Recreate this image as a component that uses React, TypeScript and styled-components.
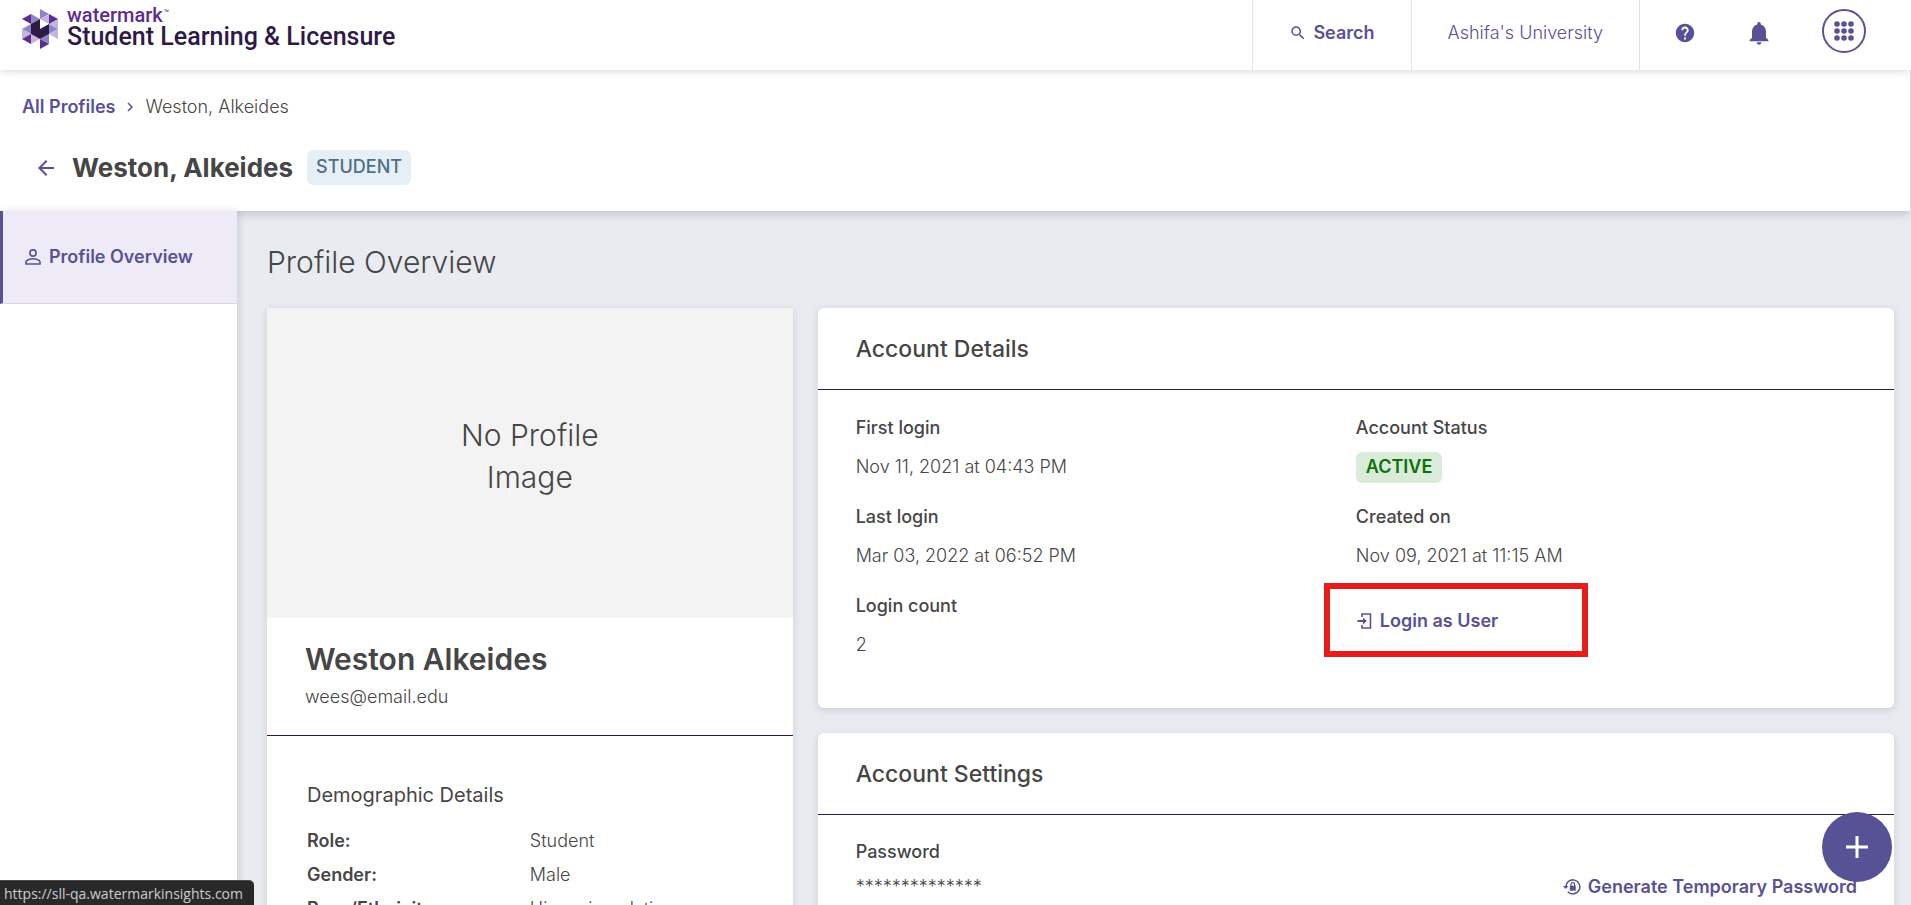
import React from "react";
import styled, { createGlobalStyle } from "styled-components";
import { MdSearch, MdHelp, MdNotifications, MdArrowBack, MdChevronRight } from "react-icons/md";

const color = {
  brand: "#575195",
  line: "#2d1a47",
  text: "#464646",
  page: "#e8ebf0",
};

const GlobalStyle = createGlobalStyle`
  *, *::before, *::after { box-sizing: border-box; }
  body {
    margin: 0;
    font-family: Inter, "Liberation Sans", sans-serif;
    font-size: 18px;
    font-weight: 350;
    line-height: 26px;
    color: ${color.text};
    background: ${color.page};
  }
  h1, h2, h3, p, dl, dt, dd { margin: 0; }
  a { color: inherit; text-decoration: none; }
  button { font: inherit; color: inherit; background: none; border: 0; padding: 0; cursor: pointer; }
`;

const Page = styled.div`
  height: 100vh;
  overflow: hidden;
  display: flex;
  flex-direction: column;
`;

const TopBar = styled.header`
  position: relative;
  z-index: 3;
  flex: none;
  display: flex;
  justify-content: space-between;
  height: 70px;
  background: #fff;
  box-shadow: 0 1px 8px rgba(0, 0, 0, 0.16);
`;

const Brand = styled.a`
  display: flex;
  align-items: flex-start;
  gap: 9px;
  padding: 6px 0 0 22px;
  font-family: Roboto, "Liberation Sans", sans-serif;
  svg { margin-top: 3px; }
`;

const BrandText = styled.span`
  display: flex;
  flex-direction: column;
`;

const BrandName = styled.span`
  display: flex;
  align-items: flex-start;
  gap: 1px;
  font-size: 20px;
  line-height: 18px;
  font-weight: 500;
  color: #5c2d91;
`;

const Trademark = styled.span`
  font-size: 9px;
  line-height: 14px;
  font-weight: 400;
`;

const ProductName = styled.span`
  font-size: 25px;
  line-height: 26px;
  font-weight: 500;
  color: #2d1a47;
`;

const TopNav = styled.nav`
  display: flex;
  color: ${color.brand};
`;

const NavItem = styled.button<{ $bold?: boolean }>`
  display: flex;
  align-items: center;
  gap: 6px;
  padding: 0 36px 4px;
  border-left: 1px solid #e3e4ea;
  font-weight: ${(p) => (p.$bold ? 600 : 350)};
`;

const NavIcons = styled.div`
  display: flex;
  align-items: center;
  gap: 49px;
  padding: 0 45px 9px 34px;
  border-left: 1px solid #e3e4ea;
`;

const IconButton = styled.button`
  display: flex;
  padding-top: 4px;
`;

const AppsButton = styled(IconButton)`
  width: 44px;
  height: 44px;
  padding-top: 0;
  align-items: center;
  justify-content: center;
  border: 2px solid ${color.brand};
  border-radius: 50%;
`;

const ProfileHeader = styled.div`
  position: relative;
  z-index: 1;
  flex: none;
  display: flex;
  flex-direction: column;
  gap: 30px;
  height: 141px;
  margin-right: 1px;
  padding: 24px 22px 0;
  background: #fff;
  box-shadow: 0 2px 10px rgba(0, 0, 0, 0.2);
`;

const Breadcrumb = styled.nav`
  display: flex;
  align-items: center;
  gap: 6px;
  a { font-weight: 600; color: ${color.brand}; }
  svg { color: ${color.brand}; }
`;

const TitleRow = styled.div`
  display: flex;
  align-items: center;
  gap: 14px;
  padding-left: 12px;
`;

const BackLink = styled.a`
  display: flex;
  color: ${color.brand};
`;

const PersonTitle = styled.h1`
  font-size: 26px;
  line-height: 34px;
  font-weight: 700;
`;

const Badge = styled.span<{ $tone: "info" | "success" }>`
  display: inline-block;
  padding: ${(p) => (p.$tone === "info" ? "4px 9px 5px" : "2px 10px 3px")};
  border-radius: 6px;
  font-weight: ${(p) => (p.$tone === "info" ? 500 : 600)};
  color: ${(p) => (p.$tone === "info" ? "#4f6f86" : "#0b720b")};
  background: ${(p) => (p.$tone === "info" ? "#e6eff6" : "#daebda")};
`;

const Body = styled.div`
  flex: 1;
  min-height: 0;
  display: flex;
`;

const Sidebar = styled.aside`
  position: relative;
  z-index: 2;
  flex: none;
  width: 237px;
  background: #fff;
  box-shadow: 2px 0 8px rgba(0, 0, 0, 0.12);
`;

const SideLink = styled.a`
  display: flex;
  align-items: center;
  gap: 8px;
  height: 93px;
  padding: 0 22px;
  border-left: 3px solid ${color.brand};
  border-bottom: 1px solid #d9d8e2;
  font-weight: 600;
  color: ${color.brand};
  background: #eeebf7;
`;

const Main = styled.main`
  flex: 1;
  min-width: 0;
  padding: 30px 17px 0 30px;
`;

const PageTitle = styled.h2`
  margin-bottom: 25px;
  font-size: 30px;
  line-height: 42px;
  font-weight: 350;
`;

const Columns = styled.div`
  display: grid;
  grid-template-columns: repeat(3, minmax(0, 1fr));
  gap: 25px;
  align-items: start;
`;

const RightColumn = styled.div`
  grid-column: span 2;
  display: grid;
  gap: 25px;
`;

const Card = styled.section<{ $square?: boolean }>`
  background: #fff;
  border-radius: ${(p) => (p.$square ? 0 : 6)}px;
  box-shadow: 0 2px 8px rgba(0, 0, 0, 0.12);
`;

const Photo = styled.div`
  display: flex;
  align-items: center;
  justify-content: center;
  height: 310px;
  padding-bottom: 14px;
  background: #f3f3f3;
  font-size: 30px;
  line-height: 42px;
  text-align: center;
  span { width: 160px; }
`;

const Identity = styled.div`
  padding: 20px 38px 25px;
  border-bottom: 1px solid ${color.line};
`;

const Name = styled.h3`
  margin-bottom: 4px;
  font-size: 30px;
  line-height: 42px;
  font-weight: 600;
`;

const Demographics = styled.div`
  padding: 45px 40px 30px;
`;

const DemographicTitle = styled.h3`
  margin-bottom: 19px;
  font-size: 20px;
  line-height: 28px;
  font-weight: 400;
`;

const DemographicList = styled.dl`
  display: grid;
  grid-template-columns: 1fr 1fr;
  row-gap: 8px;
  dt { font-weight: 600; }
`;

const CardHeader = styled.h3`
  padding: 24px 38px 23px;
  border-bottom: 1px solid ${color.line};
  font-size: 23px;
  line-height: 34px;
  font-weight: 500;
`;

const DetailGrid = styled.div`
  display: grid;
  grid-template-columns: 1fr 1fr;
  padding: 25px 38px 26px;
`;

const DetailList = styled.dl`
  dt { font-weight: 500; margin-bottom: 13px; }
  dd { height: 26px; margin-bottom: 24px; }
`;

const StatusValue = styled.dd`
  display: flex;
  align-items: center;
`;

const ActionButton = styled.button`
  display: flex;
  align-items: center;
  gap: 7px;
  font-weight: 600;
  color: ${color.brand};
`;

const Highlight = styled.div`
  position: relative;
  margin-top: 39px;
  &::before {
    content: "";
    position: absolute;
    top: -25px;
    left: -32px;
    width: 264px;
    height: 74px;
    border: 6px solid #e81c1c;
    pointer-events: none;
  }
`;

const PasswordRow = styled.div`
  display: flex;
  justify-content: space-between;
  align-items: flex-end;
  padding: 24px 37px 24px 38px;
  dt { font-weight: 500; margin-bottom: 9px; }
`;

const AddButton = styled.button`
  position: fixed;
  z-index: 4;
  right: 19px;
  bottom: 23px;
  display: flex;
  align-items: center;
  justify-content: center;
  width: 70px;
  height: 70px;
  border-radius: 50%;
  color: #fff;
  background: ${color.brand};
`;

const LinkStatus = styled.div`
  position: fixed;
  z-index: 5;
  left: 0;
  bottom: 0;
  padding: 3px 11px 1px 4px;
  border-top: 1px solid #4a4a4a;
  border-radius: 0 5px 0 0;
  font-family: "Open Sans", "Noto Sans", sans-serif;
  font-size: 14px;
  font-weight: 400;
  line-height: 20px;
  color: #c9cdd2;
  background: #292929;
`;

const Logo = () => (
  <svg width="36" height="40" viewBox="0 0 36 40" aria-hidden="true">
    <path d="M18 0v10l9-5zM9 5v10l9-5zM9 15v10l-9-5zM27 15v10l9-5zM27 25v10l-9-5z" fill="#8a85c4" />
    <path d="M27 5v10l-9-5zM36 10v10l-9-5zM0 20v10l9-5zM36 20v10l-9-5zM9 25v10l9-5z" fill="#c5b4de" />
    <path d="M9 5v10l-9-5zM27 5v10l9-5zM9 25v10l-9-5zM18 30v10l9-5z" fill="#5c2d91" />
    <path d="M9 15l9-5v10l9-5v10l-9 5-9-5z" fill="#2d1a47" />
  </svg>
);

const PersonIcon = () => (
  <svg width="16" height="16" viewBox="0 0 16 16" fill="none" stroke="currentColor" strokeWidth="1.6" aria-hidden="true">
    <circle cx="8" cy="4" r="3.1" />
    <path d="M1 15v-2c0-2 3.8-3.2 7-3.2s7 1.2 7 3.2v2z" />
  </svg>
);

const dots = [4, 11, 18];

const AppsIcon = () => (
  <svg width="22" height="22" viewBox="0 0 22 22" fill="currentColor" aria-hidden="true">
    {dots.map((y) => dots.map((x) => <circle key={`${x}-${y}`} cx={x} cy={y} r="2.8" />))}
  </svg>
);

const LoginIcon = () => (
  <svg width="17" height="16" viewBox="0 0 17 16" fill="none" stroke="currentColor" strokeWidth="1.6" aria-hidden="true">
    <path d="M6 4V1h8.5v14H6v-3" />
    <path d="M1.5 8H8" strokeWidth="2" />
    <path d="M7 4.5L10.8 8 7 11.5z" fill="currentColor" stroke="none" />
  </svg>
);

const LockResetIcon = () => (
  <svg width="18" height="16" viewBox="0 0 18 16" fill="none" stroke="currentColor" strokeWidth="1.5" aria-hidden="true">
    <path d="M2.8 8a7 7 0 1 1 2 4.8" />
    <path d="M0 7h5.5L2.7 10z" fill="currentColor" stroke="none" />
    <path d="M8 7V5.4a1.8 1.8 0 0 1 3.6 0V7" strokeWidth="1.2" />
    <path d="M6.800 6.700h6v5h-6z" fill="currentColor" stroke="none" />
  </svg>
);

const PlusIcon = () => (
  <svg width="22" height="22" viewBox="0 0 22 22" stroke="currentColor" strokeWidth="3" aria-hidden="true">
    <path d="M11 0v22M0 11h22" />
  </svg>
);

const demographics = [
  ["Role:", "Student"],
  ["Gender:", "Male"],
  ["Race/Ethnicity:", "Hispanic or latino"],
];

const loginDetails = [
  ["First login", "Nov 11, 2021 at 04:43 PM"],
  ["Last login", "Mar 03, 2022 at 06:52 PM"],
  ["Login count", "2"],
];

export default function App() {
  return (
    <Page>
      <GlobalStyle />
      <TopBar>
        <Brand href="#home">
          <Logo />
          <BrandText>
            <BrandName>watermark<Trademark>™</Trademark></BrandName>
            <ProductName>Student Learning &amp; Licensure</ProductName>
          </BrandText>
        </Brand>
        <TopNav>
          <NavItem $bold><MdSearch size={18} />Search</NavItem>
          <NavItem>Ashifa's University</NavItem>
          <NavIcons>
            <IconButton aria-label="Help"><MdHelp size={22} /></IconButton>
            <IconButton aria-label="Notifications"><MdNotifications size={28} /></IconButton>
            <AppsButton aria-label="Apps"><AppsIcon /></AppsButton>
          </NavIcons>
        </TopNav>
      </TopBar>
      <ProfileHeader>
        <Breadcrumb aria-label="Breadcrumb">
          <a href="#profiles">All Profiles</a>
          <MdChevronRight size={18} />
          <span>Weston, Alkeides</span>
        </Breadcrumb>
        <TitleRow>
          <BackLink href="#profiles" aria-label="Back"><MdArrowBack size={24} /></BackLink>
          <PersonTitle>Weston, Alkeides</PersonTitle>
          <Badge $tone="info">STUDENT</Badge>
        </TitleRow>
      </ProfileHeader>
      <Body>
        <Sidebar>
          <SideLink href="#overview"><PersonIcon />Profile Overview</SideLink>
        </Sidebar>
        <Main>
          <PageTitle>Profile Overview</PageTitle>
          <Columns>
            <Card $square>
              <Photo><span>No Profile Image</span></Photo>
              <Identity>
                <Name>Weston Alkeides</Name>
                <p>wees@email.edu</p>
              </Identity>
              <Demographics>
                <DemographicTitle>Demographic Details</DemographicTitle>
                <DemographicList>
                  {demographics.map(([label, value]) => (
                    <React.Fragment key={label}>
                      <dt>{label}</dt>
                      <dd>{value}</dd>
                    </React.Fragment>
                  ))}
                </DemographicList>
              </Demographics>
            </Card>
            <RightColumn>
              <Card>
                <CardHeader>Account Details</CardHeader>
                <DetailGrid>
                  <DetailList>
                    {loginDetails.map(([label, value]) => (
                      <React.Fragment key={label}>
                        <dt>{label}</dt>
                        <dd>{value}</dd>
                      </React.Fragment>
                    ))}
                  </DetailList>
                  <div>
                    <DetailList>
                      <dt>Account Status</dt>
                      <StatusValue><Badge $tone="success">ACTIVE</Badge></StatusValue>
                      <dt>Created on</dt>
                      <dd>Nov 09, 2021 at 11:15 AM</dd>
                    </DetailList>
                    <Highlight>
                      <ActionButton><LoginIcon />Login as User</ActionButton>
                    </Highlight>
                  </div>
                </DetailGrid>
              </Card>
              <Card>
                <CardHeader>Account Settings</CardHeader>
                <PasswordRow>
                  <dl>
                    <dt>Password</dt>
                    <dd>**************</dd>
                  </dl>
                  <ActionButton><LockResetIcon />Generate Temporary Password</ActionButton>
                </PasswordRow>
              </Card>
            </RightColumn>
          </Columns>
        </Main>
      </Body>
      <AddButton aria-label="Add"><PlusIcon /></AddButton>
      <LinkStatus>https://sll-qa.watermarkinsights.com</LinkStatus>
    </Page>
  );
}
